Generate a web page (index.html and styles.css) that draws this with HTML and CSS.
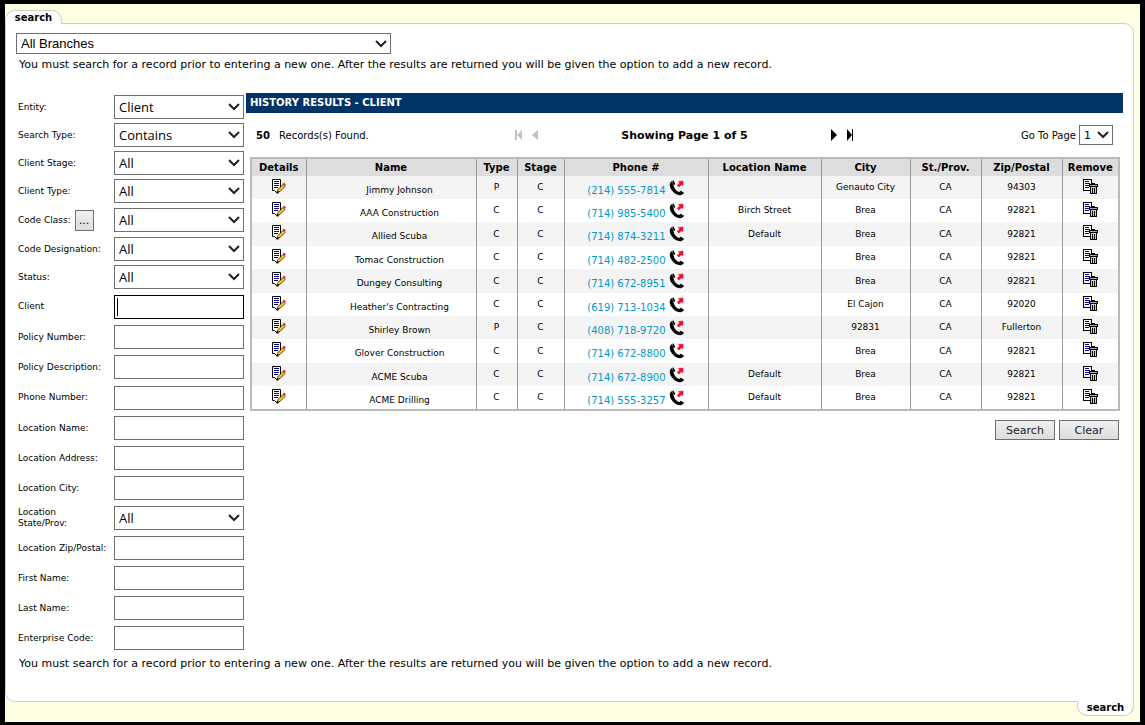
FILE: index.html
```html
<!DOCTYPE html>
<html lang="en">
<head>
    <meta charset="UTF-8">
    <meta name="viewport" content="width=device-width, initial-scale=1.0">
    <title>Search - Client</title>
    <link rel="stylesheet" href="styles.css">
</head>
<body>
    <!-- icons used in the results table -->
    <svg class="sprites" aria-hidden="true">
        <symbol id="icon-edit" viewBox="0 0 15 15">
            <path d="M1.500 .5h8v10l-1 2h-2l-1 1-2-2h-2z" fill="#fff" stroke="#000"/>
            <path d="M3 2.500h5M3 4.500h5M3 6.500h5M3 8.500h4" stroke="#00007b" shape-rendering="crispEdges"/>
            <path d="M6 13.500l1-3 5-5 2 2-5 5z" fill="#ffc820" stroke="#000" stroke-width=".7"/>
            <path d="M11.500 5l1.500-1.500 2 2L13.500 7z" fill="#e83030"/>
            <path d="M5.500 12.500h2v2h-2z"/>
        </symbol>
        <symbol id="icon-call" viewBox="0 0 16 16">
            <path d="M3 1C.2 2.500 0 6 2.500 9.800 5 13.500 9 16 12.500 15L11 12C8.500 12.300 5 8.500 4.800 6z"/>
            <path d="M3.200 .8l1.300-.3L6.300 4 4.800 5.300zM10.300 12l1.500-1.200L15 12.800l-.8 1.200-1.700 1z"/>
            <path d="M9.500 1.500L14 1v4.500L12.500 4.800 10 7 8.200 5.300 10.700 3z" fill="#ee1128" stroke="#ee1128" stroke-width=".6" stroke-linejoin="round"/>
        </symbol>
        <symbol id="icon-remove" viewBox="0 0 16 16">
            <path d="M1.500 .5h8v11h-8z" fill="#fff" stroke="#000"/>
            <path d="M3 2.500h4M3 4.500h5M3 6.500h4M3 8.500h4" stroke="#00007b"/>
            <path d="M8.500 7.500h6v7h-6z" fill="#ccc" stroke="#000"/>
            <path d="M7.500 5.500h8v2h-8z" fill="#aaa" stroke="#000"/>
            <path d="M10 4.500h3M10.500 9v5M12.500 9v5" stroke="#000"/>
        </symbol>
    </svg>

    <div class="tab tab-top">search</div>
    <main class="panel">
        <select class="branches" aria-label="Branch">
            <option>All Branches</option>
        </select>
        <p class="note">You must search for a record prior to entering a new one. After the results are returned you will be given the option to add a new record.</p>

        <div class="columns">
            <form class="filters" id="filters">
                <div class="field">
                    <label for="entity">Entity:</label>
                    <select id="entity"><option>Client</option></select>
                </div>
                <div class="field">
                    <label for="searchType">Search Type:</label>
                    <select id="searchType"><option>Contains</option></select>
                </div>
                <div class="field">
                    <label for="clientStage">Client Stage:</label>
                    <select id="clientStage"><option>All</option></select>
                </div>
                <div class="field">
                    <label for="clientType">Client Type:</label>
                    <select id="clientType"><option>All</option></select>
                </div>
                <div class="field field-code">
                    <div class="label-group">
                        <label for="codeClass">Code Class:</label>
                        <button type="button" class="more">...</button>
                    </div>
                    <select id="codeClass"><option>All</option></select>
                </div>
                <div class="field">
                    <label for="codeDesignation">Code Designation:</label>
                    <select id="codeDesignation"><option>All</option></select>
                </div>
                <div class="field">
                    <label for="status">Status:</label>
                    <select id="status"><option>All</option></select>
                </div>
                <div class="field field-tall">
                    <label for="client">Client</label>
                    <input type="text" id="client" class="current">
                </div>
                <div class="field field-text">
                    <label for="policyNumber">Policy Number:</label>
                    <input type="text" id="policyNumber">
                </div>
                <div class="field field-text">
                    <label for="policyDescription">Policy Description:</label>
                    <input type="text" id="policyDescription">
                </div>
                <div class="field field-tall">
                    <label for="phoneNumber">Phone Number:</label>
                    <input type="text" id="phoneNumber">
                </div>
                <div class="field field-text">
                    <label for="locationName">Location Name:</label>
                    <input type="text" id="locationName">
                </div>
                <div class="field field-text">
                    <label for="locationAddress">Location Address:</label>
                    <input type="text" id="locationAddress">
                </div>
                <div class="field field-text">
                    <label for="locationCity">Location City:</label>
                    <input type="text" id="locationCity">
                </div>
                <div class="field field-text">
                    <label for="locationState">Location<br>State/Prov:</label>
                    <select id="locationState"><option>All</option></select>
                </div>
                <div class="field field-text">
                    <label for="locationZip">Location Zip/Postal:</label>
                    <input type="text" id="locationZip">
                </div>
                <div class="field field-text">
                    <label for="firstName">First Name:</label>
                    <input type="text" id="firstName">
                </div>
                <div class="field field-text">
                    <label for="lastName">Last Name:</label>
                    <input type="text" id="lastName">
                </div>
                <div class="field field-text">
                    <label for="enterpriseCode">Enterprise Code:</label>
                    <input type="text" id="enterpriseCode">
                </div>
            </form>

            <section class="results">
                <h2>HISTORY RESULTS - CLIENT</h2>
                <div class="pager">
                    <div class="found"><b>50</b> Records(s) Found.</div>
                    <div class="pages">
                        <span class="arrows">
                            <button type="button" disabled aria-label="First page"><svg width="8" height="12" viewBox="0 0 8 12"><path d="M0 1h2v10H0zM7 1v10L2 6z"/></svg></button>
                            <button type="button" disabled aria-label="Previous page"><svg width="8" height="12" viewBox="0 0 8 12"><path d="M7 1v10L1 6z"/></svg></button>
                        </span>
                        <b>Showing Page 1 of 5</b>
                        <span class="arrows">
                            <button type="button" aria-label="Next page"><svg width="8" height="12" viewBox="0 0 8 12"><path d="M1 0v12l6-6z"/></svg></button>
                            <button type="button" aria-label="Last page"><svg width="8" height="12" viewBox="0 0 8 12"><path d="M1 0v12l5-6zM6 0h1v12H6z"/></svg></button>
                        </span>
                    </div>
                    <div class="goto">
                        <label for="page">Go To Page</label>
                        <select id="page"><option>1</option></select>
                    </div>
                </div>

                <table>
                    <colgroup>
                        <col class="c-details"><col class="c-name"><col class="c-type"><col class="c-stage"><col class="c-phone"><col class="c-location"><col class="c-city"><col class="c-state"><col class="c-zip"><col class="c-remove">
                    </colgroup>
                    <thead>
                        <tr>
                            <th>Details</th>
                            <th>Name</th>
                            <th>Type</th>
                            <th>Stage</th>
                            <th>Phone #</th>
                            <th>Location Name</th>
                            <th>City</th>
                            <th>St./Prov.</th>
                            <th>Zip/Postal</th>
                            <th>Remove</th>
                        </tr>
                    </thead>
                    <tbody>
                        <tr>
                            <td class="icon"><button type="button" aria-label="Details"><svg class="edit"><use href="#icon-edit"/></svg></button></td>
                            <td class="name">Jimmy Johnson</td>
                            <td>P</td>
                            <td>C</td>
                            <td class="phone"><a href="tel:2145557814">(214) 555-7814</a> <svg><use href="#icon-call"/></svg></td>
                            <td></td>
                            <td>Genauto City</td>
                            <td>CA</td>
                            <td>94303</td>
                            <td class="icon"><button type="button" aria-label="Remove"><svg class="remove"><use href="#icon-remove"/></svg></button></td>
                        </tr>
                        <tr>
                            <td class="icon"><button type="button" aria-label="Details"><svg class="edit"><use href="#icon-edit"/></svg></button></td>
                            <td class="name">AAA Construction</td>
                            <td>C</td>
                            <td>C</td>
                            <td class="phone"><a href="tel:7149855400">(714) 985-5400</a> <svg><use href="#icon-call"/></svg></td>
                            <td>Birch Street</td>
                            <td>Brea</td>
                            <td>CA</td>
                            <td>92821</td>
                            <td class="icon"><button type="button" aria-label="Remove"><svg class="remove"><use href="#icon-remove"/></svg></button></td>
                        </tr>
                        <tr>
                            <td class="icon"><button type="button" aria-label="Details"><svg class="edit"><use href="#icon-edit"/></svg></button></td>
                            <td class="name">Allied Scuba</td>
                            <td>C</td>
                            <td>C</td>
                            <td class="phone"><a href="tel:7148743211">(714) 874-3211</a> <svg><use href="#icon-call"/></svg></td>
                            <td>Default</td>
                            <td>Brea</td>
                            <td>CA</td>
                            <td>92821</td>
                            <td class="icon"><button type="button" aria-label="Remove"><svg class="remove"><use href="#icon-remove"/></svg></button></td>
                        </tr>
                        <tr>
                            <td class="icon"><button type="button" aria-label="Details"><svg class="edit"><use href="#icon-edit"/></svg></button></td>
                            <td class="name">Tomac Construction</td>
                            <td>C</td>
                            <td>C</td>
                            <td class="phone"><a href="tel:7144822500">(714) 482-2500</a> <svg><use href="#icon-call"/></svg></td>
                            <td></td>
                            <td>Brea</td>
                            <td>CA</td>
                            <td>92821</td>
                            <td class="icon"><button type="button" aria-label="Remove"><svg class="remove"><use href="#icon-remove"/></svg></button></td>
                        </tr>
                        <tr>
                            <td class="icon"><button type="button" aria-label="Details"><svg class="edit"><use href="#icon-edit"/></svg></button></td>
                            <td class="name">Dungey Consulting</td>
                            <td>C</td>
                            <td>C</td>
                            <td class="phone"><a href="tel:7146728951">(714) 672-8951</a> <svg><use href="#icon-call"/></svg></td>
                            <td></td>
                            <td>Brea</td>
                            <td>CA</td>
                            <td>92821</td>
                            <td class="icon"><button type="button" aria-label="Remove"><svg class="remove"><use href="#icon-remove"/></svg></button></td>
                        </tr>
                        <tr>
                            <td class="icon"><button type="button" aria-label="Details"><svg class="edit"><use href="#icon-edit"/></svg></button></td>
                            <td class="name">Heather's Contracting</td>
                            <td>C</td>
                            <td>C</td>
                            <td class="phone"><a href="tel:6197131034">(619) 713-1034</a> <svg><use href="#icon-call"/></svg></td>
                            <td></td>
                            <td>El Cajon</td>
                            <td>CA</td>
                            <td>92020</td>
                            <td class="icon"><button type="button" aria-label="Remove"><svg class="remove"><use href="#icon-remove"/></svg></button></td>
                        </tr>
                        <tr>
                            <td class="icon"><button type="button" aria-label="Details"><svg class="edit"><use href="#icon-edit"/></svg></button></td>
                            <td class="name">Shirley Brown</td>
                            <td>P</td>
                            <td>C</td>
                            <td class="phone"><a href="tel:4087189720">(408) 718-9720</a> <svg><use href="#icon-call"/></svg></td>
                            <td></td>
                            <td>92831</td>
                            <td>CA</td>
                            <td>Fullerton</td>
                            <td class="icon"><button type="button" aria-label="Remove"><svg class="remove"><use href="#icon-remove"/></svg></button></td>
                        </tr>
                        <tr>
                            <td class="icon"><button type="button" aria-label="Details"><svg class="edit"><use href="#icon-edit"/></svg></button></td>
                            <td class="name">Glover Construction</td>
                            <td>C</td>
                            <td>C</td>
                            <td class="phone"><a href="tel:7146728800">(714) 672-8800</a> <svg><use href="#icon-call"/></svg></td>
                            <td></td>
                            <td>Brea</td>
                            <td>CA</td>
                            <td>92821</td>
                            <td class="icon"><button type="button" aria-label="Remove"><svg class="remove"><use href="#icon-remove"/></svg></button></td>
                        </tr>
                        <tr>
                            <td class="icon"><button type="button" aria-label="Details"><svg class="edit"><use href="#icon-edit"/></svg></button></td>
                            <td class="name">ACME Scuba</td>
                            <td>C</td>
                            <td>C</td>
                            <td class="phone"><a href="tel:7146728900">(714) 672-8900</a> <svg><use href="#icon-call"/></svg></td>
                            <td>Default</td>
                            <td>Brea</td>
                            <td>CA</td>
                            <td>92821</td>
                            <td class="icon"><button type="button" aria-label="Remove"><svg class="remove"><use href="#icon-remove"/></svg></button></td>
                        </tr>
                        <tr>
                            <td class="icon"><button type="button" aria-label="Details"><svg class="edit"><use href="#icon-edit"/></svg></button></td>
                            <td class="name">ACME Drilling</td>
                            <td>C</td>
                            <td>C</td>
                            <td class="phone"><a href="tel:7145553257">(714) 555-3257</a> <svg><use href="#icon-call"/></svg></td>
                            <td>Default</td>
                            <td>Brea</td>
                            <td>CA</td>
                            <td>92821</td>
                            <td class="icon"><button type="button" aria-label="Remove"><svg class="remove"><use href="#icon-remove"/></svg></button></td>
                        </tr>
                    </tbody>
                </table>

                <div class="actions">
                    <button type="submit" form="filters">Search</button>
                    <button type="reset" form="filters">Clear</button>
                </div>
            </section>
        </div>

        <p class="note">You must search for a record prior to entering a new one. After the results are returned you will be given the option to add a new record.</p>
    </main>
    <div class="tab tab-bottom">search</div>
</body>
</html>
```
FILE: styles.css
```css
* {
    box-sizing: border-box;
}
html {
    background: #000;
}
body {
    display: flex;
    flex-direction: column;
    min-height: calc(100vh - 7px);
    margin: 4px 5px 3px;
    padding: 6px 6px 6px 0;
    background: #ffffe1;
    color: #000;
    font-family: Verdana, "DejaVu Sans", sans-serif;
    font-size: 11px;
}
.sprites {
    position: absolute;
    width: 0;
    height: 0;
}

/* tabs and panel */
.tab {
    position: relative;
    z-index: 1;
    width: 57px;
    height: 14px;
    background: #fff;
    border: 1px solid #ccc;
    font-weight: bold;
    font-size: 10px;
    line-height: 14px;
    text-align: center;
}
.tab-top {
    margin-bottom: -1px;
    border-bottom: none;
    border-radius: 10px 10px 0 0;
}
.tab-bottom {
    align-self: flex-end;
    height: 15px;
    margin-top: -1px;
    border-top: none;
    border-radius: 0 0 10px 10px;
}
.panel {
    flex: 1;
    padding: 9px 10px;
    background: #fff;
    border: 1px solid #ccc;
    border-radius: 0 10px 0 10px;
}
.note {
    margin: 0;
    padding-left: 3px;
    line-height: 21px;
}
.columns {
    display: flex;
    gap: 2px;
    margin-top: 18px;
}

/* form controls */
select,
input {
    height: 24px;
    margin: 0;
    padding: 0 4px;
    background-color: #fff;
    border: 1px solid #707070;
    border-radius: 0;
    color: #000;
    font-family: "Open Sans", sans-serif;
    font-size: 13px;
}
select {
    appearance: none;
    background-image: url("data:image/svg+xml,%3Csvg xmlns='http://www.w3.org/2000/svg' width='12' height='8'%3E%3Cpath d='M1 1l5 5 5-5' fill='none' stroke='%23222' stroke-width='2'/%3E%3C/svg%3E");
    background-repeat: no-repeat;
    background-position: right 3px center;
}
.branches {
    display: block;
    width: 375px;
    height: 21px;
    font-family: "Liberation Sans", Arial, sans-serif;
}
.filters {
    flex: none;
    width: 228px;
}
.field {
    display: flex;
    align-items: center;
    height: 28px;
    padding-left: 2px;
    font-size: 9px;
    line-height: 11px;
}
.field-code,
.field-text {
    height: 30px;
}
.field-tall {
    height: 31px;
}
.field > label,
.label-group {
    flex: none;
    width: 96px;
}
.field > select,
.field > input {
    width: 130px;
}
.label-group {
    display: flex;
    align-items: center;
    gap: 4px;
}
.more {
    width: 19px;
    height: 21px;
    padding: 0;
    background: linear-gradient(#f0f0f0, #ddd);
    border: 1px solid #707070;
    font-family: inherit;
    font-size: 11px;
}
.current {
    border-color: #000;
    background: linear-gradient(#000, #000) 2px center / 1px 18px no-repeat;
}

/* results */
.results {
    flex: 1;
    min-width: 0;
}
.results h2 {
    margin: 0;
    padding-left: 4px;
    background: #003366;
    color: #fff;
    font-size: 10px;
    line-height: 20px;
}
.pager {
    display: grid;
    grid-template-columns: 1fr 340px 1fr;
    align-items: center;
    height: 44px;
    padding: 0 10px;
    font-size: 10px;
}
.found b {
    margin-right: 6px;
}
.pages {
    display: flex;
    align-items: center;
    justify-content: space-between;
    font-size: 11px;
}
.arrows {
    display: flex;
    gap: 8px;
}
.arrows button,
td button {
    display: block;
    padding: 0;
    background: none;
    border: none;
    color: #000;
    cursor: pointer;
}
.arrows button:disabled {
    color: #c0c0c0;
    cursor: default;
}
.arrows svg {
    display: block;
    fill: currentColor;
}
.goto {
    display: flex;
    align-items: center;
    justify-content: flex-end;
    gap: 3px;
}
.goto select {
    width: 34px;
    height: 20px;
    font-family: inherit;
    font-size: 11px;
}

table {
    table-layout: fixed;
    width: calc(100% - 8px);
    margin: 0 4px;
    border: 2px solid #bbb;
    border-collapse: collapse;
}
.c-details { width: 55px; }
.c-name { width: 170px; }
.c-type { width: 41px; }
.c-stage { width: 47px; }
.c-phone { width: 144px; }
.c-location { width: 113px; }
.c-city { width: 89px; }
.c-state { width: 71px; }
.c-zip { width: 81px; }
.c-remove { width: 57px; }
th,
td {
    padding: 0;
    border-left: 1px solid #999;
    text-align: center;
    white-space: nowrap;
}
th {
    height: 18px;
    background: #ddd;
    font-size: 10px;
}
td {
    height: 23px;
    font-size: 9px;
    line-height: 11px;
}
tbody tr:nth-child(5n) td,
tbody tr:nth-child(5n+3) td {
    height: 24px;
}
tbody tr:nth-child(odd) {
    background: #f4f4f4;
}
td.icon {
    padding-top: 3px;
    vertical-align: top;
}
td button {
    margin: 0 auto;
}
td svg {
    display: block;
    width: 16px;
    height: 16px;
}
td .edit {
    width: 15px;
    height: 15px;
}
td .remove {
    shape-rendering: crispEdges;
}
td.name {
    padding: 5px 0 0 17px;
}
td.phone {
    font-size: 10px;
}
td.phone svg {
    display: inline-block;
    vertical-align: -2px;
}
td a {
    color: #0099cc;
    text-decoration: none;
}

.actions {
    display: flex;
    justify-content: flex-end;
    gap: 4px;
    padding: 9px 4px 0;
}
.actions button {
    width: 60px;
    height: 20px;
    padding: 0;
    background: linear-gradient(#f0f0f0, #ddd);
    border: 1px solid #707070;
    color: #222;
    font-family: inherit;
    font-size: 11px;
}
```
